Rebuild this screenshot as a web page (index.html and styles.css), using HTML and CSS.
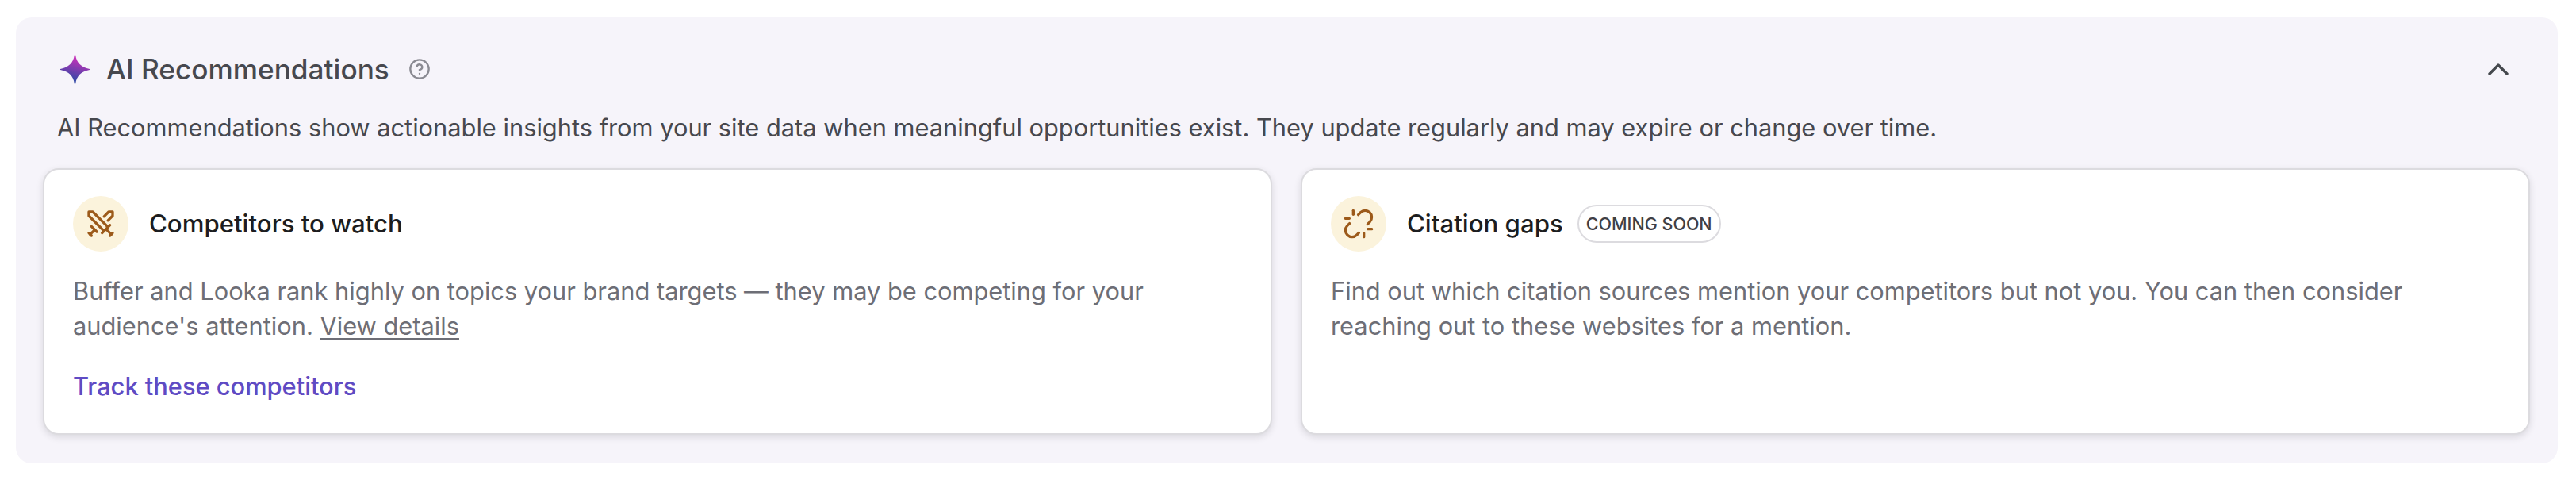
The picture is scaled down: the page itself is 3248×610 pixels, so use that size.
FILE: index.html
```html
<!DOCTYPE html>
<html lang="en">
<head>
<meta charset="utf-8">
<title>AI Recommendations</title>
<link rel="stylesheet" href="styles.css">
</head>
<body>
<section class="panel">
  <header class="panel-head">
    <svg class="star" viewBox="0 0 36 36" aria-hidden="true">
      <defs>
        <linearGradient id="starGrad" x1="0.62" y1="0.05" x2="0.38" y2="0.95">
          <stop offset="0.1" stop-color="#c231b8"/>
          <stop offset="0.9" stop-color="#3448a6"/>
        </linearGradient>
      </defs>
      <path fill="url(#starGrad)" d="M17.3 0.5 18 0 18.7 0.5Q20.5 14.5 36 17.4V18.6Q20.5 21.5 18.7 35.5L18 36 17.3 35.5Q15.5 21.5 0 18.6V17.4Q15.5 14.5 17.3 0.5Z"/>
    </svg>
    <h2 class="panel-title">AI Recommendations</h2>
    <svg class="help" viewBox="0 0 24 24" fill="none" stroke="currentColor" stroke-width="2" stroke-linecap="round" stroke-linejoin="round" aria-hidden="true">
      <circle cx="12" cy="12" r="10"/>
      <path d="M9.1 9a3 3 0 0 1 5.8 1c0 2-3 3-3 3"/>
      <path d="M12 17h.01"/>
    </svg>
    <svg class="chevron" viewBox="0 0 26 15" fill="none" stroke="currentColor" stroke-width="3.4" stroke-linecap="round" stroke-linejoin="round" aria-hidden="true">
      <path d="M2 13 13 2l11 11"/>
    </svg>
  </header>
  <p class="panel-desc">AI Recommendations show actionable insights from your site data when meaningful opportunities exist. They update regularly and may expire or change over time.</p>
  <div class="cards">
    <article class="card">
      <div class="card-head">
        <span class="badge-icon">
          <svg viewBox="0 0 24 24" fill="none" stroke="currentColor" stroke-width="2" stroke-linecap="round" stroke-linejoin="round" aria-hidden="true">
            <polyline points="14.5 17.5 3 6 3 3 6 3 17.5 14.5"/>
            <line x1="13" x2="19" y1="19" y2="13"/>
            <line x1="16" x2="20" y1="16" y2="20"/>
            <line x1="19" x2="21" y1="21" y2="19"/>
            <polyline points="14.5 6.5 18 3 21 3 21 6 17.5 9.5"/>
            <line x1="5" x2="9" y1="14" y2="18"/>
            <line x1="7" x2="4" y1="17" y2="20"/>
            <line x1="3" x2="5" y1="19" y2="21"/>
          </svg>
        </span>
        <h3 class="card-title">Competitors to watch</h3>
      </div>
      <p class="card-text">Buffer and Looka rank highly on topics your brand targets — they may be competing for your audience's attention. <a class="details" href="#">View details</a></p>
      <a class="action" href="#">Track these competitors</a>
    </article>
    <article class="card">
      <div class="card-head">
        <span class="badge-icon">
          <svg viewBox="0 0 24 24" fill="none" stroke="currentColor" stroke-width="2" stroke-linecap="round" stroke-linejoin="round" aria-hidden="true">
            <path d="m18.84 12.25 1.72-1.71h-.02a5.004 5.004 0 0 0-.12-7.07 5.006 5.006 0 0 0-6.95 0l-1.72 1.71"/>
            <path d="m5.17 11.75-1.71 1.71a5.004 5.004 0 0 0 .12 7.07 5.006 5.006 0 0 0 6.95 0l1.71-1.71"/>
            <line x1="8" x2="8" y1="2" y2="5"/>
            <line x1="2" x2="5" y1="8" y2="8"/>
            <line x1="16" x2="16" y1="19" y2="22"/>
            <line x1="19" x2="22" y1="16" y2="16"/>
          </svg>
        </span>
        <h3 class="card-title">Citation gaps</h3>
        <span class="pill">COMING SOON</span>
      </div>
      <p class="card-text">Find out which citation sources mention your competitors but not you. You can then consider reaching out to these websites for a mention.</p>
    </article>
  </div>
</section>
</body>
</html>
```

FILE: styles.css
```css
* { box-sizing: border-box; }

html, body {
  margin: 0;
  background: #ffffff;
}

body {
  padding: 22px 23px 26px 20px;
  font-family: Inter, "Liberation Sans", sans-serif;
}

.panel {
  height: 562px;
  padding: 40px 35px 0 34px;
  background: #f6f4fa;
  border-radius: 20px;
}

.panel-head {
  display: flex;
  align-items: center;
  height: 50px;
  padding-left: 22px;
}

.star {
  width: 37px;
  height: 37px;
  flex: none;
}

.panel-title {
  margin: 0 0 0 21px;
  font-size: 35.2px;
  line-height: 50px;
  font-weight: 500;
  color: #47484e;
}

.help {
  width: 28px;
  height: 28px;
  margin-left: 24px;
  color: #8b8b93;
}

.chevron {
  width: 26px;
  height: 15px;
  margin-left: auto;
  margin-right: 27px;
  color: #45484d;
}

.panel-desc {
  margin: 27px 0 0 18px;
  font-size: 30.8px;
  line-height: 44px;
  color: #47484e;
}

.cards {
  display: grid;
  grid-template-columns: 1fr 1fr;
  gap: 36px;
  margin-top: 29px;
}

.card {
  height: 336px;
  padding: 33px 36px;
  background: #ffffff;
  border: 2px solid #dcdbdf;
  border-radius: 20px;
  box-shadow: 0 3px 8px rgba(40, 40, 50, 0.14);
}

.card-head {
  display: flex;
  align-items: center;
  height: 70px;
}

.badge-icon {
  display: flex;
  align-items: center;
  justify-content: center;
  width: 70px;
  height: 70px;
  flex: none;
  border-radius: 50%;
  background: #fbf3dc;
  color: #9c5a1a;
}

.badge-icon svg {
  width: 40px;
  height: 40px;
}

.card-title {
  margin: 0 0 0 26px;
  font-size: 31.2px;
  line-height: 44px;
  font-weight: 500;
  color: #1c1d20;
}

.pill {
  display: flex;
  align-items: center;
  height: 48px;
  margin-left: 18px;
  padding: 0 9px;
  border: 2px solid #dcdbdf;
  border-radius: 24px;
  font-size: 21.5px;
  font-weight: 500;
  color: #3f4046;
}

.card-text {
  margin: 28px 0 0;
  font-size: 30.8px;
  line-height: 44px;
  color: #6d6e76;
}

.details {
  color: inherit;
  text-decoration: underline;
  text-decoration-thickness: 2px;
  text-underline-offset: 4px;
}

.action {
  display: block;
  margin-top: 32px;
  font-size: 30.8px;
  line-height: 44px;
  font-weight: 500;
  color: #5f4bc4;
  text-decoration: none;
}
```
